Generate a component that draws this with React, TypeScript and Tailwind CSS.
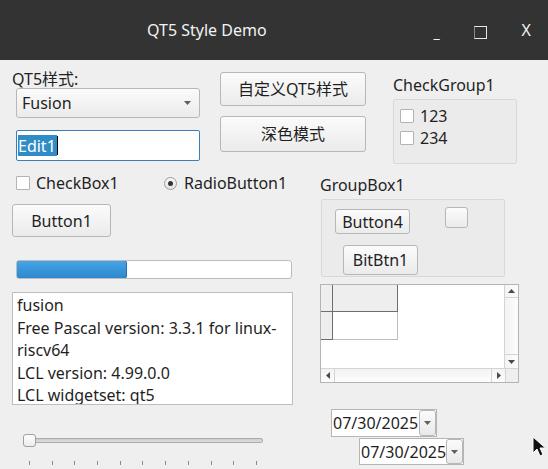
import React from "react";

// Qt5 "Fusion" style widgets, drawn with plain divs.

function Btn({ children, className = "" }: { children?: React.ReactNode; className?: string }) {
  return (
    <div
      className={`flex items-center justify-center rounded-[3px] border border-[#b7b7b7] bg-gradient-to-b from-[#fbfbfb] to-[#ebebeb] text-[#1f1f1f] ${className}`}
    >
      {children}
    </div>
  );
}

function Check({ label }: { label: string }) {
  return (
    <div className="flex h-[22px] items-center">
      <div className="size-[14px] rounded-[1px] border border-[#b3b3b3] bg-white" />
      <span className="ml-[6px]">{label}</span>
    </div>
  );
}

function Caret({ className = "" }: { className?: string }) {
  return (
    <svg viewBox="0 0 7 4" className={`h-[4px] w-[7px] ${className}`}>
      <path d="M0 0h7L3.5 4z" fill="#5f5f5f" />
    </svg>
  );
}

function DateEdit({ className = "" }: { className?: string }) {
  return (
    <div className={`flex items-stretch border border-[#b5b5b5] bg-white ${className}`}>
      <span className="flex flex-1 items-center pl-[1px] leading-none">07/30/2025</span>
      <div className="flex w-[17px] items-center justify-center rounded-[3px] border border-[#b7b7b7] bg-gradient-to-b from-[#fbfbfb] to-[#e9e9e9]">
        <Caret />
      </div>
    </div>
  );
}

function ScrollArrow({ dir }: { dir: "up" | "down" | "left" | "right" }) {
  const d = {
    up: "M0 4h7L3.5 0z",
    down: "M0 0h7L3.5 4z",
    left: "M4 0v7L0 3.5z",
    right: "M0 0v7L4 3.5z",
  }[dir];
  const v = dir === "up" || dir === "down" ? "0 0 7 4" : "0 0 4 7";
  const size = dir === "up" || dir === "down" ? "h-[4px] w-[7px]" : "h-[7px] w-[4px]";
  return (
    <svg viewBox={v} className={size}>
      <path d={d} fill="#4a4a4a" />
    </svg>
  );
}

function StringGrid() {
  return (
    <div className="flex h-[99px] w-[199px] flex-col border border-[#b4b4b4] bg-white">
      <div className="flex flex-1">
        <div className="flex-1">
          <div className="flex">
            <div className="h-[27px] w-[12px] border-r border-b border-[#6e6e6e] bg-[#eeeeee]" />
            <div className="h-[27px] w-[65px] border-r border-b border-[#6e6e6e] bg-[#eeeeee]" />
          </div>
          <div className="flex">
            <div className="h-[28px] w-[12px] border-r border-b border-[#6e6e6e] bg-[#eeeeee]" />
            <div className="h-[28px] w-[65px] border-r border-b border-[#bdbdbd] bg-white" />
          </div>
        </div>
        <div className="flex w-[14px] flex-col border-l border-[#d4d4d4] bg-gradient-to-r from-[#f3f3f3] to-[#fdfdfd]">
          <div className="flex h-[13px] items-center justify-center border-b border-[#d4d4d4]">
            <ScrollArrow dir="up" />
          </div>
          <div className="flex-1" />
          <div className="flex h-[14px] items-center justify-center border-t border-[#d4d4d4]">
            <ScrollArrow dir="down" />
          </div>
        </div>
      </div>
      <div className="flex h-[14px] border-t border-[#d4d4d4] bg-gradient-to-b from-[#f3f3f3] to-[#fdfdfd]">
        <div className="flex w-[14px] items-center justify-center border-r border-[#d4d4d4]">
          <ScrollArrow dir="left" />
        </div>
        <div className="flex-1" />
        <div className="flex w-[14px] items-center justify-center border-l border-[#d4d4d4]">
          <ScrollArrow dir="right" />
        </div>
        <div className="w-[13px] border-l border-[#d4d4d4] bg-[#efefef]" />
      </div>
    </div>
  );
}

export default function App() {
  const ticks = Array.from({ length: 11 }, (_, i) => i);

  return (
    <div className="relative h-[469px] w-[548px] overflow-hidden bg-[#efefef] font-['Noto_Sans','Noto_Sans_CJK_SC',sans-serif] text-[16px] text-[#1f1f1f]">
      {/* title bar */}
      <div className="flex h-[60px] items-center bg-[#333333] text-[#f2f2f2]">
        <span className="ml-[147px] text-[16px]">QT5 Style Demo</span>
        <span className="ml-auto mt-[6px] text-[14px] leading-none">_</span>
        <div className="ml-[34px] mt-[4px] size-[13px] border border-[#e8e8e8] border-l-[#8a8a8a]" />
        <span className="ml-[35px] mr-[17px] text-[16px] leading-none">X</span>
      </div>

      {/* top section */}
      <div className="flex h-[105px]">
        <div className="ml-[12px] flex w-[188px] flex-col pt-[9px]">
          <div className="h-[20px] leading-[20px]">QT5样式:</div>
          <div className="ml-[4px] -mt-[1px] flex h-[30px] w-[184px] items-center justify-between rounded-[3px] border border-[#b7b7b7] bg-gradient-to-b from-[#fbfbfb] to-[#ebebeb] pl-[5px] pr-[8px]">
            <span>Fusion</span>
            <Caret />
          </div>
          <div className="ml-[4px] mt-[12px] flex h-[31px] w-[184px] items-center rounded-[2px] border border-[#3c7fb8] bg-white pl-[1px]">
            <span className="flex h-[21px] items-center bg-[#308cc6] pr-[1px] text-white">Edit1</span>
            <span className="h-[19px] w-px bg-black" />
          </div>
        </div>

        <div className="ml-[20px] flex w-[146px] flex-col pt-[12px]">
          <Btn className="h-[34px]">自定义QT5样式</Btn>
          <Btn className="mt-[10px] h-[36px]">深色模式</Btn>
        </div>

        <div className="ml-[27px] flex flex-col pt-[15px]">
          <div className="h-[20px] leading-[20px]">CheckGroup1</div>
          <div className="mt-[4px] flex h-[65px] w-[124px] flex-col rounded-[2px] border border-[#d8d8d8] bg-[#ebebeb] pl-[6px] pt-[5px]">
            <Check label="123" />
            <Check label="234" />
          </div>
        </div>
      </div>

      {/* bottom section */}
      <div className="flex">
        <div className="ml-[12px] flex w-[282px] flex-col">
          <div className="mt-[8px] flex h-[20px] items-center">
            <div className="ml-[4px] size-[14px] shrink-0 rounded-[1px] border border-[#b3b3b3] bg-white" />
            <span className="ml-[6px] w-[128px]">CheckBox1</span>
            <div className="flex size-[13px] shrink-0 items-center justify-center rounded-full border border-[#9c9c9c] bg-gradient-to-b from-[#f7f7f7] to-[#e4e4e4]">
              <div className="size-[5px] rounded-full bg-[#333333]" />
            </div>
            <span className="ml-[7px] whitespace-nowrap">RadioButton1</span>
          </div>

          <Btn className="mt-[11px] h-[33px] w-[99px]">Button1</Btn>

          <div className="ml-[4px] mt-[23px] flex h-[19px] w-[276px] overflow-hidden rounded-[3px] border border-[#bcbcbc] bg-white">
            <div className="-m-px h-[19px] w-[111px] rounded-[3px] border border-[#2c6ea5] bg-gradient-to-b from-[#45a4e6] to-[#2e88cf]" />
          </div>

          <div className="mt-[13px] h-[113px] w-[281px] overflow-hidden border border-[#bdbdbd] bg-white pl-[4px] pt-[1px] leading-[22.5px]">
            <div>fusion</div>
            <div>Free Pascal version: 3.3.1 for linux-</div>
            <div>riscv64</div>
            <div>LCL version: 4.99.0.0</div>
            <div>LCL widgetset: qt5</div>
          </div>

          <div className="ml-[11px] mt-[29px] flex h-[12px] w-[240px] items-center">
            <div className="size-[13px] shrink-0 rounded-[3px] border border-[#a0a0a0] bg-gradient-to-b from-[#ffffff] to-[#ececec]" />
            <div className="h-[5px] flex-1 rounded-r-[3px] border border-l-0 border-[#ababab] bg-gradient-to-b from-[#cdcdcd] to-[#dcdcdc]" />
          </div>
          <div className="ml-[17px] mt-[15px] flex w-[228px] justify-between">
            {ticks.map((t) => (
              <div key={t} className="h-[4px] w-px bg-[#8a8a8a]" />
            ))}
          </div>
        </div>

        <div className="ml-[26px] flex w-[199px] flex-col">
          <div className="mt-[10px] h-[20px] leading-[20px]">GroupBox1</div>
          <div className="ml-[1px] mt-[4px] h-[78px] w-[184px] rounded-[2px] border border-[#d8d8d8] bg-[#ebebeb] pt-[7px]">
            <div className="flex items-start">
              <Btn className="ml-[13px] mt-[2px] h-[25px] w-[75px]">Button4</Btn>
              <Btn className="ml-[35px] h-[21px] w-[23px]" />
            </div>
            <Btn className="ml-[21px] mt-[11px] h-[30px] w-[75px]">BitBtn1</Btn>
          </div>

          <div className="mt-[7px]">
            <StringGrid />
          </div>

          <DateEdit className="ml-[11px] mt-[26px] h-[28px] w-[106px]" />
          <DateEdit className="ml-[39px] mt-px h-[27px] w-[105px]" />
        </div>
      </div>

      {/* mouse pointer over the form */}
      <svg viewBox="0 0 14 22" className="absolute left-[532px] top-[436px] h-[22px] w-[14px]">
        <path d="M1 1v16l4-4 3 7 3-1.5-3-6.5h5.5z" fill="#111" stroke="#fff" strokeWidth="1" />
      </svg>
    </div>
  );
}
